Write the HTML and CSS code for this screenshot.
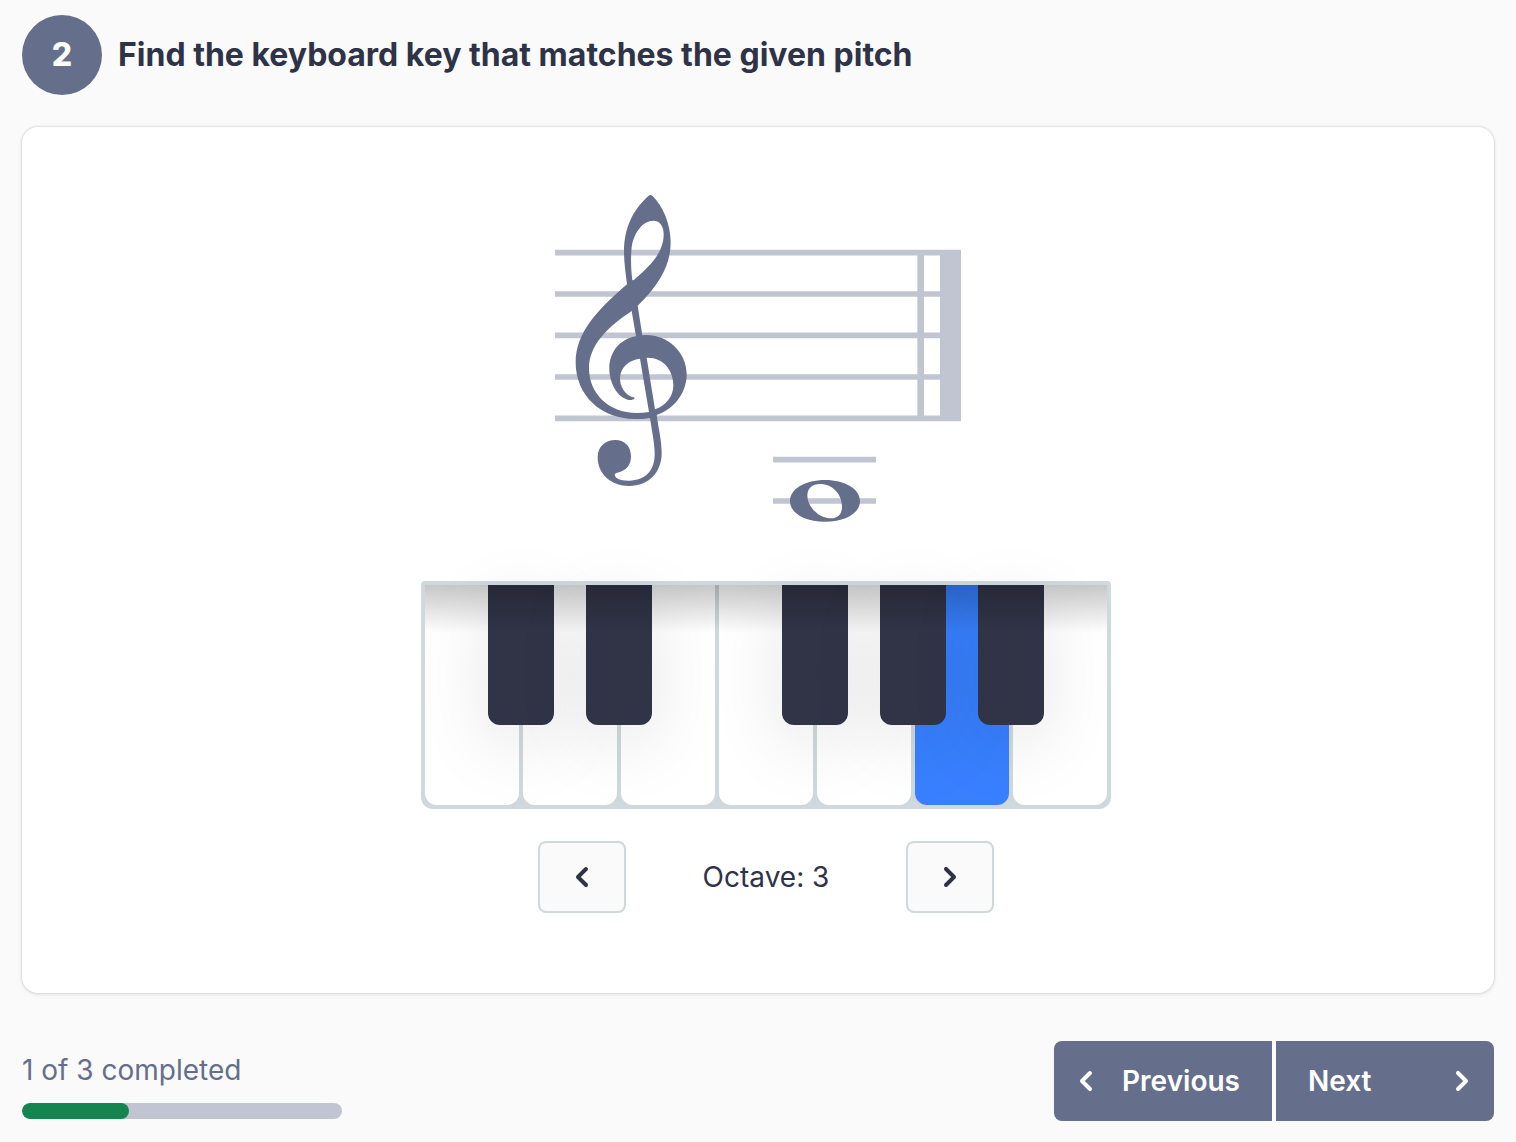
FILE: index.html
```html
<!DOCTYPE html>
<html lang="en">
<head>
    <meta charset="utf-8">
    <meta name="viewport" content="width=device-width, initial-scale=1">
    <title>Pitch exercise</title>
    <link rel="stylesheet" href="styles.css">
</head>
<body>
    <header class="header">
        <span class="step">2</span>
        <h1>Find the keyboard key that matches the given pitch</h1>
    </header>

    <main class="card">
        <svg class="staff" viewBox="15 15 1218 1020" role="img" aria-label="Treble clef with a whole note on the second ledger line below the staff">
            <g class="staff-lines">
                <path d="M15 203H1233M15 327H1233M15 451H1233M15 576H1233M15 700H1233M669 824H978M669 948H978"/>
            </g>
            <g class="barline">
                <rect x="1102" y="195" width="20" height="513"/>
                <rect x="1170" y="195" width="63" height="513"/>
            </g>
            <!-- treble clef -->
            <path class="glyph" fill-rule="evenodd" d="M307 32C339 62 362 118 362 172C362 232 336 292 263 362L277 451C345 444 410 496 410 568C410 626 370 674 320 690C326 732 335 768 335 805C335 860 298 903 237 903C184 903 143 868 143 817C143 785 165 765 196 765C226 765 243 786 243 814C243 840 229 858 202 863C192 865 192 872 199 878C206 884 218 887 237 887C286 887 314 857 314 808C314 776 306 740 300 699C286 702 270 702 255 702C153 702 77 632 77 532C77 443 142 375 231 298C227 265 222 232 222 200C222 120 256 68 295 33Q301 28 307 32Z
                M247 285C242 249 242 204 246 180C253 142 279 107 310 107C331 107 341 125 341 148C341 204 299 243 254 283Q250 287 247 285Z
                M245 378L258 454C209 462 178 502 178 551C178 599 208 645 244 645Q253 644 254 640Q253 636 246 636C224 628 210 605 210 580C210 549 235 525 270 521L297 681C285 683 272 684 260 684C175 684 117 625 117 550C117 482 170 428 245 378Z
                M290 518C338 516 370 554 370 601C370 635 348 662 315 673Z"/>
            <!-- whole note -->
            <path class="glyph" fill-rule="evenodd" d="M825 885C885 885 930 912 930 948C930 984 887 1010 825 1010C763 1010 720 984 720 948C720 912 765 885 825 885Z
                M810 897C787 897 772 910 772 932C772 965 806 1000 844 1000C864 1000 876 986 876 966C876 927 848 897 810 897Z"/>
        </svg>

        <div class="player">
            <div class="keyboard">
                <button type="button" class="key" aria-label="C"></button>
                <button type="button" class="key key-black" aria-label="C sharp"></button>
                <button type="button" class="key" aria-label="D"></button>
                <button type="button" class="key key-black" aria-label="D sharp"></button>
                <button type="button" class="key" aria-label="E"></button>
                <button type="button" class="key" aria-label="F"></button>
                <button type="button" class="key key-black" aria-label="F sharp"></button>
                <button type="button" class="key" aria-label="G"></button>
                <button type="button" class="key key-black" aria-label="G sharp"></button>
                <button type="button" class="key key-selected" aria-label="A" aria-pressed="true"></button>
                <button type="button" class="key key-black" aria-label="A sharp"></button>
                <button type="button" class="key" aria-label="B"></button>
            </div>

            <div class="octave">
                <button type="button" class="octave-button" aria-label="Lower octave">
                    <svg class="icon" viewBox="0 0 16 16"><path d="M7.41 8l3.29-3.29c.19-.18.3-.43.3-.71a1.003 1.003 0 0 0-1.71-.71l-4 4C5.11 7.47 5 7.72 5 8c0 .28.11.53.29.71l4 4a1.003 1.003 0 0 0 1.42-1.42L7.41 8z"/></svg>
                </button>
                <span class="octave-label">Octave: 3</span>
                <button type="button" class="octave-button" aria-label="Higher octave">
                    <svg class="icon" viewBox="0 0 16 16"><path d="M10.71 7.29l-4-4a1.003 1.003 0 0 0-1.42 1.42L8.59 8 5.3 11.29c-.19.18-.3.43-.3.71a1.003 1.003 0 0 0 1.71.71l4-4c.18-.18.29-.43.29-.71 0-.28-.11-.53-.29-.71z"/></svg>
                </button>
            </div>
        </div>
    </main>

    <footer class="footer">
        <div class="completion">
            <label for="progress">1 of 3 completed</label>
            <progress id="progress" class="progress" value="1" max="3"></progress>
        </div>
        <nav class="pager">
            <button type="button" class="pager-button previous">
                <svg class="icon" viewBox="0 0 16 16"><path d="M7.41 8l3.29-3.29c.19-.18.3-.43.3-.71a1.003 1.003 0 0 0-1.71-.71l-4 4C5.11 7.47 5 7.72 5 8c0 .28.11.53.29.71l4 4a1.003 1.003 0 0 0 1.42-1.42L7.41 8z"/></svg>
                Previous
            </button>
            <button type="button" class="pager-button next">
                Next
                <svg class="icon" viewBox="0 0 16 16"><path d="M10.71 7.29l-4-4a1.003 1.003 0 0 0-1.42 1.42L8.59 8 5.3 11.29c-.19.18-.3.43-.3.71a1.003 1.003 0 0 0 1.71.71l4-4c.18-.18.29-.43.29-.71 0-.28-.11-.53-.29-.71z"/></svg>
            </button>
        </nav>
    </footer>
</body>
</html>
```
FILE: styles.css
```css
* {
    box-sizing: border-box;
}
body {
    margin: 0;
    padding: 15px 22px 21px;
    background-color: #fafafa;
    color: #2f3347;
    font-family: Inter, sans-serif;
    font-size: 28px;
    line-height: 40px;
}
button {
    margin: 0;
    padding: 0;
    border: 0;
    color: inherit;
    font: inherit;
    cursor: pointer;
}
.icon {
    display: block;
    width: 32px;
    height: 32px;
    fill: currentColor;
}
.header {
    display: flex;
    align-items: center;
    gap: 16px;
    margin-bottom: 32px;
}
.header h1 {
    margin: 0;
    font-size: 32px;
    font-weight: 700;
}
.step {
    display: flex;
    align-items: center;
    justify-content: center;
    width: 80px;
    height: 80px;
    border-radius: 50%;
    background-color: #656f8c;
    color: #fff;
    font-size: 32px;
    font-weight: 800;
}
.card {
    display: flex;
    flex-direction: column;
    align-items: center;
    gap: 51px;
    padding: 63px 32px 80px;
    border-radius: 16px;
    background-color: #fff;
    box-shadow: 0 0 2px 1px rgba(0, 0, 0, 0.1), 0 2px 5px rgba(0, 0, 0, 0.06);
}
.staff {
    display: block;
    width: 406px;
    height: 340px;
}
.staff-lines {
    stroke: #c1c5d2;
    stroke-width: 17;
}
.barline {
    fill: #c1c5d2;
}
.glyph {
    fill: #656f8c;
}
.player {
    display: flex;
    flex-direction: column;
    align-items: center;
    gap: 32px;
    padding-left: 16px;
}
.keyboard {
    position: relative;
    display: flex;
    gap: 4px;
    padding: 4px;
    border-radius: 4px 4px 12px 12px;
    background-color: #cfd8dc;
}
/* shade under the top edge of the case */
.keyboard::after {
    content: "";
    position: absolute;
    z-index: 2;
    top: 4px;
    left: 4px;
    right: 4px;
    height: 48px;
    background: linear-gradient(rgba(0, 0, 0, 0.22), rgba(0, 0, 0, 0));
    pointer-events: none;
}
.key {
    width: 94px;
    height: 220px;
    border-radius: 0 0 12px 12px;
    background-color: #fff;
}
.key-selected {
    background-color: #3880ff;
}
.key-black {
    position: relative;
    z-index: 1;
    width: 66px;
    height: 140px;
    margin: 0 -35px;
    background-color: #313447;
    box-shadow: 0 20px 72px rgba(0, 0, 0, 0.1);
}
.octave {
    display: flex;
    align-items: center;
}
.octave-button {
    display: flex;
    align-items: center;
    justify-content: center;
    width: 88px;
    height: 72px;
    border: 2px solid #cfd8dc;
    border-radius: 8px;
    background-color: #fafafa;
}
.octave-label {
    width: 280px;
    text-align: center;
}
.footer {
    display: flex;
    align-items: center;
    justify-content: space-between;
    margin-top: 48px;
}
.completion {
    display: flex;
    flex-direction: column;
    gap: 13px;
    width: 320px;
    padding-top: 7px;
    color: #656f8c;
}
.progress {
    display: block;
    width: 100%;
    height: 16px;
    border: 0;
    border-radius: 8px;
    background-color: #c1c5d2;
    overflow: hidden;
    appearance: none;
}
.progress::-webkit-progress-bar {
    background-color: #c1c5d2;
}
.progress::-webkit-progress-value {
    border-radius: 8px;
    background-color: #13854e;
}
.pager {
    display: flex;
    gap: 4px;
    border-radius: 8px;
    background-color: #fff;
}
.pager-button {
    display: flex;
    align-items: center;
    justify-content: space-between;
    width: 218px;
    height: 80px;
    background-color: #656f8c;
    color: #fff;
    font-weight: 600;
}
.previous {
    padding: 0 32px 0 16px;
    border-radius: 8px 0 0 8px;
}
.next {
    padding: 0 16px 0 32px;
    border-radius: 0 8px 8px 0;
}
```
